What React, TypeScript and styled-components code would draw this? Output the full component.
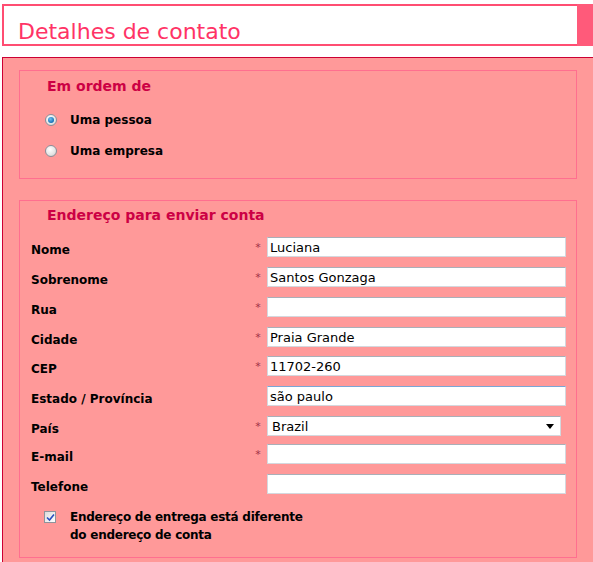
import React from "react";
import styled, { createGlobalStyle } from "styled-components";

const Global = createGlobalStyle`
  html, body { margin: 0; padding: 0; background: #ffffff; overflow: hidden; }
  body { font-family: "DejaVu Sans", Verdana, sans-serif; }
  * { box-sizing: border-box; }
`;

const Page = styled.div`
  width: 593px;
  height: 562px;
  padding-top: 4px;
  padding-left: 2px;
  overflow: hidden;
`;

const Header = styled.div`
  display: flex;
  height: 42px;
  background: #ff5a7a;
`;

const TitleBox = styled.div`
  flex: 1;
  background: #ffffff;
  border: 2px solid #ff4d72;
  border-right: none;
  padding: 14px 0 0 14px;
`;

const Title = styled.h1`
  margin: 0;
  font-family: "DejaVu Sans", Verdana, sans-serif;
  font-weight: normal;
  font-size: 22px;
  line-height: 24px;
  color: #ff3366;
`;

const Accent = styled.div`
  width: 16px;
`;

const Panel = styled.div`
  margin-top: 11px;
  background: #ff9999;
  border-top: 1px solid #cc0033;
  border-left: 1px solid #cc0033;
  padding: 12px 16px 0 16px;
  height: 520px;
  display: flex;
  flex-direction: column;
  gap: 21px;
`;

const Box = styled.div<{ $pt: number; $pb: number }>`
  border: 1px solid #ff6f8f;
  padding: ${(p) => p.$pt}px 10px ${(p) => p.$pb}px 11px;
`;

const Legend = styled.div`
  font-weight: bold;
  font-size: 14px;
  line-height: 18px;
  color: #cc0044;
  padding-left: 16px;
`;

const RadioList = styled.div`
  display: flex;
  flex-direction: column;
  gap: 11px;
  margin-top: 15px;
  padding-left: 14px;
`;

const Choice = styled.label`
  display: flex;
  align-items: center;
  height: 20px;
  font-weight: bold;
  font-size: 12px;
  color: #000;
  gap: 13px;
`;

const RadioDot = styled.span<{ $on: boolean }>`
  width: 12px;
  height: 12px;
  border-radius: 50%;
  border: 1px solid #8a8f99;
  background: radial-gradient(circle at 40% 35%, #ffffff 0%, #e4e4e4 60%, #c4c4c4 100%);
  display: flex;
  align-items: center;
  justify-content: center;
  &::after {
    content: "";
    display: ${(p) => (p.$on ? "block" : "none")};
    width: 6px;
    height: 6px;
    border-radius: 50%;
    background: radial-gradient(circle at 40% 35%, #6fc0f0 0%, #1670b8 70%, #0a4f8a 100%);
  }
`;

const Grid = styled.div`
  display: grid;
  grid-template-columns: 220px 16px 1fr;
  row-gap: 10px;
  margin-top: 13px;
`;

const Label = styled.div<{ $shift?: number }>`
  display: flex;
  align-items: center;
  height: 20px;
  padding-top: 5px;
  font-weight: bold;
  font-size: 12px;
  color: #000;
  margin-top: ${(p) => p.$shift ?? 0}px;
`;

const Star = styled.div<{ $shift?: number }>`
  display: flex;
  align-items: center;
  justify-content: center;
  height: 20px;
  font-size: 11px;
  color: #a03048;
  padding-right: 2px;
  margin-top: ${(p) => p.$shift ?? 0}px;
`;

const Field = styled.input<{ $focus?: boolean; $shift?: number }>`
  height: 20px;
  width: 100%;
  margin: ${(p) => p.$shift ?? 0}px 0 0 0;
  padding: 0 2px;
  font-family: "DejaVu Sans", Verdana, sans-serif;
  font-size: 13px;
  color: #000;
  background: #fff;
  border: 1px solid #d4d8de;
  border-top-color: ${(p) => (p.$focus ? "#7aa6d6" : "#a9afb8")};
  outline: none;
`;

const SelectBox = styled.div`
  position: relative;
  width: 294px;
  height: 20px;
  background: #fff;
  border: 1px solid #d4d8de;
  border-top-color: #a9afb8;
  font-size: 13px;
  display: flex;
  align-items: center;
  padding-left: 4px;
`;

const Arrow = styled.span`
  position: absolute;
  right: 6px;
  top: 7px;
  width: 0;
  height: 0;
  border-left: 4px solid transparent;
  border-right: 4px solid transparent;
  border-top: 5px solid #000;
`;

const CheckRow = styled.label`
  display: flex;
  align-items: flex-start;
  gap: 14px;
  margin-top: 14px;
  padding-left: 13px;
  font-weight: bold;
  font-size: 12px;
  letter-spacing: -0.25px;
  line-height: 18px;
  color: #000;
`;

const CheckBoxMark = styled.span`
  flex: none;
  width: 12px;
  height: 12px;
  margin-top: 3px;
  border: 1px solid #8e949c;
  background: linear-gradient(135deg, #dcdcdc, #ffffff);
  display: flex;
  align-items: center;
  justify-content: center;
`;

type Row = { label: string; req: boolean; value?: string; focus?: boolean; select?: boolean; shift?: number };

const rows: Row[] = [
  { label: "Nome", req: true, value: "Luciana" },
  { label: "Sobrenome", req: true, value: "Santos Gonzaga" },
  { label: "Rua", req: true, value: "" },
  { label: "Cidade", req: true, value: "Praia Grande" },
  { label: "CEP", req: true, value: "11702-260", shift: -1 },
  { label: "Estado / Província", req: false, value: "são paulo", focus: true },
  { label: "País", req: true, select: true },
  { label: "E-mail", req: true, value: "", shift: -2 },
  { label: "Telefone", req: false, value: "" },
];

export default function App() {
  return (
    <Page>
      <Global />
      <Header>
        <TitleBox>
          <Title>Detalhes de contato</Title>
        </TitleBox>
        <Accent />
      </Header>
      <Panel>
        <Box $pt={6} $pb={17}>
          <Legend>Em ordem de</Legend>
          <RadioList>
            <Choice>
              <RadioDot $on={true} />
              Uma pessoa
            </Choice>
            <Choice>
              <RadioDot $on={false} />
              Uma empresa
            </Choice>
          </RadioList>
        </Box>
        <Box $pt={5} $pb={13}>
          <Legend>Endereço para enviar conta</Legend>
          <Grid>
            {rows.map((r) => (
              <React.Fragment key={r.label}>
                <Label $shift={r.shift}>{r.label}</Label>
                <Star $shift={r.shift}>{r.req ? "*" : ""}</Star>
                {r.select ? (
                  <SelectBox>
                    Brazil
                    <Arrow />
                  </SelectBox>
                ) : (
                  <Field $focus={r.focus} $shift={r.shift} defaultValue={r.value} readOnly />
                )}
              </React.Fragment>
            ))}
          </Grid>
          <CheckRow>
            <CheckBoxMark>
              <svg width="9" height="9" viewBox="0 0 9 9">
                <path d="M1 4.5 L3.5 7 L8 1.5" fill="none" stroke="#2a4fc0" strokeWidth="1.6" />
              </svg>
            </CheckBoxMark>
            <span>
              Endereço de entrega está diferente
              <br />
              do endereço de conta
            </span>
          </CheckRow>
        </Box>
      </Panel>
    </Page>
  );
}
